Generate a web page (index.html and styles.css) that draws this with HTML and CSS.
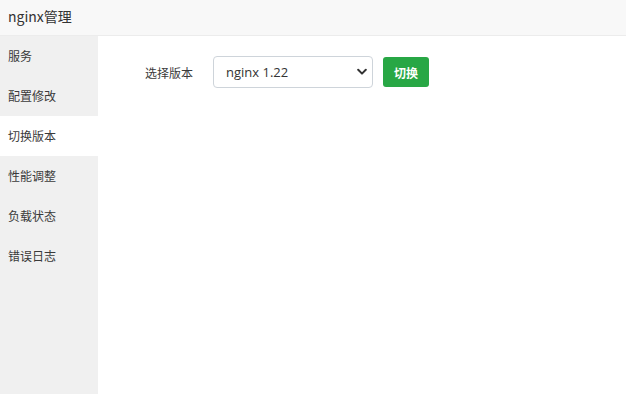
FILE: index.html
```html
<!DOCTYPE html>
<html lang="zh">
<head>
<meta charset="utf-8">
<title>nginx管理</title>
<link rel="stylesheet" href="styles.css">
</head>
<body>
<div class="app">
  <header class="topbar">nginx管理</header>
  <div class="body">
    <nav class="sidebar">
      <div class="item">服务</div>
      <div class="item">配置修改</div>
      <div class="item active">切换版本</div>
      <div class="item">性能调整</div>
      <div class="item">负载状态</div>
      <div class="item">错误日志</div>
    </nav>
    <main class="main">
      <div class="row">
        <label class="label">选择版本</label>
        <div class="select-wrap">
          <select class="select">
            <option>nginx 1.22</option>
          </select>
          <svg class="chev" width="10" height="8" viewBox="0 0 10 8"><path d="M1.2 1.8 L5 5.6 L8.8 1.8" fill="none" stroke="#333" stroke-width="2" stroke-linecap="round" stroke-linejoin="round"/></svg>
        </div>
        <button class="btn">切换</button>
      </div>
    </main>
  </div>
</div>
</body>
</html>
```

FILE: styles.css
```css
* { box-sizing: border-box; }
html, body { margin: 0; padding: 0; height: 100%; }
body {
  font-family: "Noto Sans CJK SC", "Noto Sans", sans-serif;
  color: #333;
  background: #fff;
}
.app { display: flex; flex-direction: column; height: 394px; }
.topbar {
  height: 36px;
  flex: none;
  background: #f8f8f8;
  border-bottom: 1px solid #ececec;
  padding: 0 8px;
  font-size: 14px;
  line-height: 32px;
  color: #333;
}
.body { flex: 1; display: flex; min-height: 0; }
.sidebar {
  width: 98px;
  flex: none;
  background: #f0f0f0;
}
.item {
  height: 40px;
  line-height: 40px;
  padding-left: 8px;
  font-size: 12px;
  color: #3a3a3a;
}
.item.active { background: #fff; }
.main { flex: 1; padding: 20px 0 0 47px; }
.row { display: flex; align-items: center; }
.label { font-size: 12px; color: #3a3a3a; margin-right: 20px; }
.select-wrap { position: relative; width: 160px; height: 32px; margin-right: 10px; }
.select {
  appearance: none;
  -webkit-appearance: none;
  width: 100%;
  height: 100%;
  border: 1px solid #ced4da;
  border-radius: 4px;
  background: #fff;
  padding: 0 24px 0 12px;
  font-family: "Open Sans", "Noto Sans", sans-serif;
  font-size: 13px;
  color: #333;
}
.chev { position: absolute; right: 6px; top: 12px; pointer-events: none; }
.btn {
  height: 30px;
  width: 46px;
  border: none;
  border-radius: 3px;
  background: #28a745;
  color: #fff;
  font-family: "Noto Sans CJK SC", sans-serif;
  font-size: 12px;
  font-weight: bold;
  padding: 0;
}
```
